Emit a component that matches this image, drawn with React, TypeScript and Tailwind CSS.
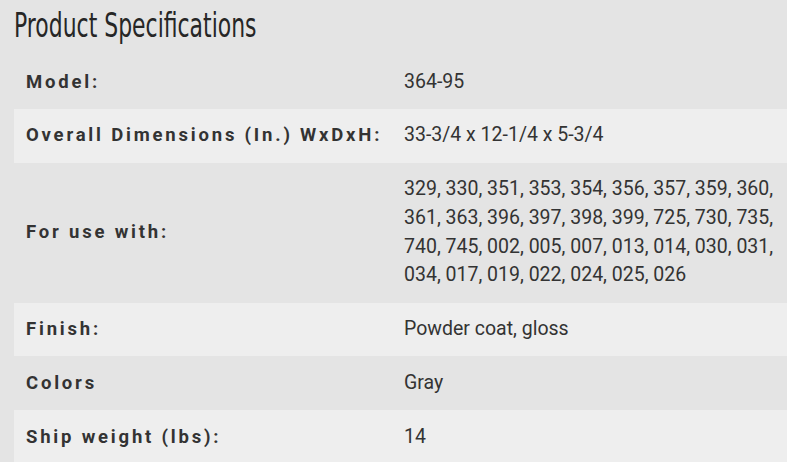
import React from "react";

const rows: { label: string; value: string; light: boolean }[] = [
  { label: "Model:", value: "364-95", light: false },
  { label: "Overall Dimensions (In.) WxDxH:", value: "33-3/4 x 12-1/4 x 5-3/4", light: true },
  {
    label: "For use with:",
    value:
      "329, 330, 351, 353, 354, 356, 357, 359, 360, 361, 363, 396, 397, 398, 399, 725, 730, 735, 740, 745, 002, 005, 007, 013, 014, 030, 031, 034, 017, 019, 022, 024, 025, 026",
    light: false,
  },
  { label: "Finish:", value: "Powder coat, gloss", light: true },
  { label: "Colors", value: "Gray", light: false },
  { label: "Ship weight (lbs):", value: "14", light: true },
];

export default function App() {
  return (
    <div className="w-[787px] h-[462px] overflow-hidden bg-[#e4e4e4] pl-[14px] text-[#333333]">
      <div className="h-[55px] pt-[4px]">
        <h2
          className="inline-block origin-left scale-x-[0.645] text-[34px] leading-[42px] text-[#262626] tracking-[0px]"
          style={{ fontFamily: '"DejaVu Sans", sans-serif' }}
        >
          Product Specifications
        </h2>
      </div>
      <div className="flex flex-col" style={{ fontFamily: "Roboto, sans-serif" }}>
        {rows.map((r) => (
          <div
            key={r.label}
            className={`flex items-center py-[12.5px] ${r.light ? "bg-[#eeeeee]" : "bg-[#e4e4e4]"}`}
          >
            <div className="w-[390px] shrink-0 pl-[12px] text-[18.5px] font-bold tracking-[2.8px] leading-[28.75px]">
              {r.label}
            </div>
            <div className="w-[383px] text-[19.5px] leading-[28.75px]">{r.value}</div>
          </div>
        ))}
      </div>
    </div>
  );
}
